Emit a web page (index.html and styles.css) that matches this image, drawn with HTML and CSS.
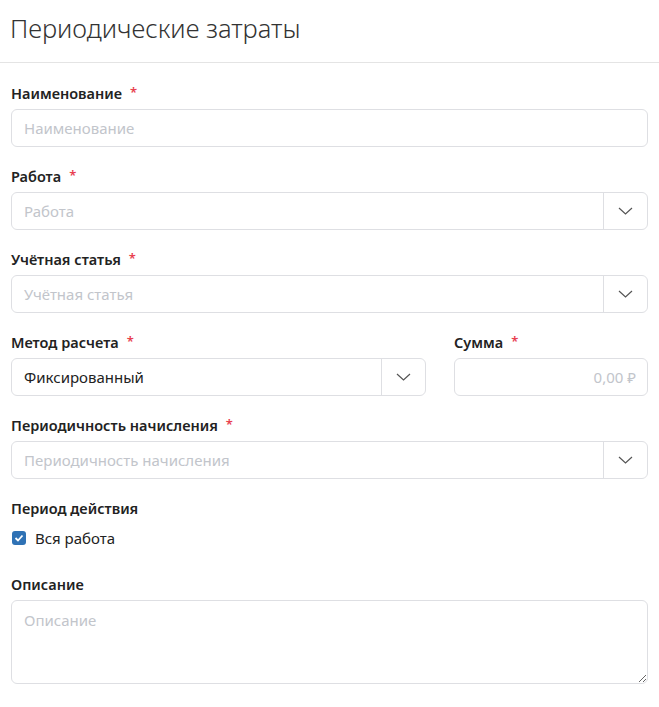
FILE: index.html
```html
<!DOCTYPE html>
<html lang="ru">
<head>
    <meta charset="UTF-8">
    <meta name="viewport" content="width=device-width, initial-scale=1.0">
    <title>Периодические затраты</title>
    <link rel="stylesheet" href="styles.css">
</head>
<body>
    <header class="page-header">
        <h1>Периодические затраты</h1>
    </header>

    <form class="form">
        <div class="form-group">
            <label class="label required" for="name">Наименование</label>
            <input class="input" type="text" id="name" placeholder="Наименование">
        </div>

        <div class="form-group">
            <label class="label required">Работа</label>
            <div class="select">
                <span class="select-value placeholder">Работа</span>
                <span class="select-arrow">
                    <svg width="15" height="8" viewBox="0 0 15 8"><path d="M1 1l6.5 6L14 1" fill="none" stroke="#555" stroke-width="1.2"/></svg>
                </span>
            </div>
        </div>

        <div class="form-group">
            <label class="label required">Учётная статья</label>
            <div class="select">
                <span class="select-value placeholder">Учётная статья</span>
                <span class="select-arrow">
                    <svg width="15" height="8" viewBox="0 0 15 8"><path d="M1 1l6.5 6L14 1" fill="none" stroke="#555" stroke-width="1.2"/></svg>
                </span>
            </div>
        </div>

        <div class="form-row">
            <div class="form-group">
                <label class="label required">Метод расчета</label>
                <div class="select">
                    <span class="select-value">Фиксированный</span>
                    <span class="select-arrow">
                        <svg width="15" height="8" viewBox="0 0 15 8"><path d="M1 1l6.5 6L14 1" fill="none" stroke="#555" stroke-width="1.2"/></svg>
                    </span>
                </div>
            </div>
            <div class="form-group">
                <label class="label required" for="sum">Сумма</label>
                <input class="input input-right" type="text" id="sum" placeholder="0,00 ₽">
            </div>
        </div>

        <div class="form-group">
            <label class="label required">Периодичность начисления</label>
            <div class="select">
                <span class="select-value placeholder">Периодичность начисления</span>
                <span class="select-arrow">
                    <svg width="15" height="8" viewBox="0 0 15 8"><path d="M1 1l6.5 6L14 1" fill="none" stroke="#555" stroke-width="1.2"/></svg>
                </span>
            </div>
        </div>

        <div class="form-group group-check">
            <label class="label">Период действия</label>
            <label class="check">
                <span class="check-box">
                    <svg width="10" height="8" viewBox="0 0 10 8"><path d="M1.5 4l2.5 2.5L8.5 1.5" fill="none" stroke="#fff" stroke-width="1.8"/></svg>
                </span>
                Вся работа
            </label>
        </div>

        <div class="form-group">
            <label class="label" for="descr">Описание</label>
            <textarea class="input textarea" id="descr" placeholder="Описание"></textarea>
        </div>
    </form>
</body>
</html>
```

FILE: styles.css
```css
body {
    font-family: "Noto Sans", "Open Sans", sans-serif;
    margin: 0;
    padding: 0;
    background-color: #fff;
    color: #222;
}
.page-header {
    border-bottom: 1px solid #e4e4e4;
    padding: 10px 10px 0;
    height: 52px;
}
.page-header h1 {
    margin: 0;
    font-size: 25.5px;
    font-weight: 300;
    line-height: 36px;
    color: #333;
}
.form {
    padding: 20px 11px 0;
}
.form-group {
    margin-bottom: 19px;
}
.form-row {
    display: grid;
    grid-template-columns: 415px 1fr;
    column-gap: 28px;
}
.label {
    display: block;
    font-size: 14.5px;
    font-weight: 600;
    line-height: 20px;
    height: 20px;
    margin-bottom: 6px;
    color: #222;
}
.label.required::after {
    content: "*";
    color: #e8404f;
    margin-left: 8px;
    font-size: 13px;
    position: relative;
    top: -2px;
}
.input {
    display: block;
    box-sizing: border-box;
    width: 100%;
    height: 38px;
    padding: 0 12px;
    border: 1px solid #dedfe3;
    border-radius: 6px;
    font-family: inherit;
    font-size: 15px;
    color: #222;
    outline: none;
}
.input::placeholder {
    color: #c2c5cb;
}
.input-right {
    text-align: right;
    padding-right: 11px;
}
.textarea {
    height: 84px;
    padding-top: 9px;
    resize: vertical;
}
.select {
    display: flex;
    height: 38px;
    box-sizing: border-box;
    border: 1px solid #dedfe3;
    border-radius: 6px;
}
.select-value {
    flex: 1;
    padding: 0 12px;
    font-size: 15px;
    line-height: 36px;
    white-space: nowrap;
    overflow: hidden;
}
.select-value.placeholder {
    color: #c2c5cb;
}
.select-arrow {
    width: 43px;
    border-left: 1px solid #dedfe3;
    display: flex;
    align-items: center;
    justify-content: center;
}
.group-check {
    margin-bottom: 26px;
}
.check {
    display: flex;
    align-items: center;
    gap: 9px;
    font-size: 15px;
    line-height: 20px;
    margin-top: 10px;
    padding-left: 1px;
}
.check-box {
    width: 14px;
    height: 14px;
    border-radius: 3px;
    background-color: #2f72b5;
    display: flex;
    align-items: center;
    justify-content: center;
}
```
